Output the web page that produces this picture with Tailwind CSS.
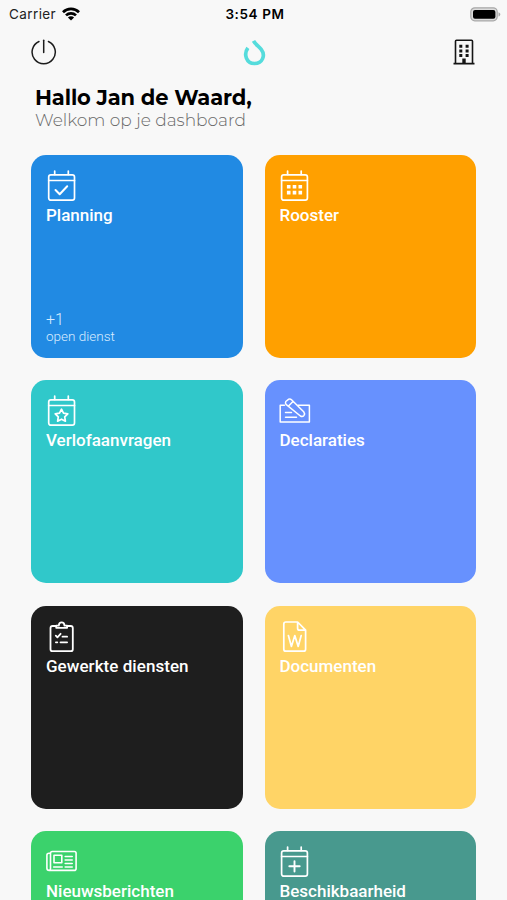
<!doctype html>
<html lang="nl">

<head>
    <meta charset="utf-8">
    <meta name="viewport" content="width=device-width, initial-scale=1">
    <title>Dashboard</title>
    <script src="https://cdn.jsdelivr.net/npm/@tailwindcss/browser@4"></script>
</head>

<body class="h-[900px] overflow-hidden bg-[#f8f8f8] font-['Roboto',sans-serif] text-black">

    <!-- status bar -->
    <div class="grid h-7 grid-cols-3 items-center pr-[6px] pl-[9px] font-['Inter',sans-serif] text-[13.5px] leading-7">
        <div class="flex items-center gap-[6px] text-[#222]">
            <span class="tracking-[0.4px]">Carrier</span>
            <svg class="h-[14px] w-[18px]" viewBox="0 0 18 14" fill="none" stroke="#000" stroke-width="2.7">
                <path d="M1 5.2a11.4 11.4 0 0 1 16 0"></path>
                <path d="M4 8.4a7.1 7.1 0 0 1 10 0"></path>
                <path d="M9 13.5L5.9 10.5a4.4 4.4 0 0 1 6.2 0z" fill="#000" stroke="none"></path>
            </svg>
        </div>
        <span class="text-center font-semibold tracking-[0.6px] whitespace-nowrap">3:54 PM</span>
        <svg class="h-[15px] w-[31px] justify-self-end" viewBox="0 0 31 15">
            <rect x=".8" y=".8" width="26.4" height="13" rx="4" fill="#dcdcdc" stroke="#a8a8a8" stroke-width="1.2"></rect>
            <rect x="3" y="2.9" width="22.4" height="8.9" rx="2" fill="#000"></rect>
            <path d="M28.5 5.2c2.4.9 2.4 3.4 0 4.3z" fill="#a8a8a8"></path>
        </svg>
    </div>

    <!-- top navigation -->
    <nav class="flex h-12 items-center justify-between pr-[31px] pl-[31px]">
        <svg class="h-[26px] w-[26px]" viewBox="0 0 26 26" fill="none" stroke="#1c1c1c" stroke-width="1.5" stroke-linecap="round">
            <path d="M8 2.5a11.6 11.6 0 1 0 9.4 0"></path>
            <path d="M12.7 1.3v12.2"></path>
        </svg>
        <svg class="h-[28px] w-[24px]" viewBox="0 0 24 28" fill="none" stroke="#55dcdc" stroke-width="3.700">
            <path d="M4.900 9.800C0.300 16.200 3.300 25.500 11.500 25.500C19.700 25.500 22.700 17.200 18.200 11.300C16 8.500 12.400 6.500 10.500 2.900"></path>
        </svg>
        <svg class="h-[26px] w-[24px]" viewBox="0 0 24 26" fill="none" stroke="#151515" stroke-width="1.6">
            <path d="M3.500 24.300V2.300q0-1 1-1h15q1 0 1 1v22M1.500 24.600h21"></path>
            <path d="M7.300 5.700h3v3h-3zM13.600 5.700h3v3h-3zM7.300 10.400h3v3h-3zM13.600 10.400h3v3h-3zM7.300 15.100h3v3h-3zM13.600 15.100h3v3h-3zM10.300 19.500h3.400v5h-3.400z" fill="#151515" stroke="none"></path>
        </svg>
    </nav>

    <header class="h-[79px] pt-[10px] pl-[35px] font-['Montserrat','Inter',sans-serif] whitespace-nowrap">
        <h1 class="text-[21px] leading-6 font-bold tracking-[-0.12px]">Hallo Jan de Waard,</h1>
        <p class="text-[17px] leading-[21px] font-light tracking-[-0.01px] text-[#6a6a6a]">Welkom op je dashboard</p>
    </header>

    <main class="ml-[31.4px] grid w-[445px] auto-rows-[203.2px] grid-cols-2 gap-x-[22px] gap-y-[22.1px] text-white">

        <a class="flex flex-col rounded-[15px] bg-[#218ae3] px-[14.6px] pt-[15px] pb-[14px]">
            <svg class="h-8 w-8" viewBox="0 0 32 32" fill="none" stroke="currentColor" stroke-width="1.7" stroke-linecap="round" stroke-linejoin="round">
                <rect x="2.7" y="4.8" width="25.8" height="25.4" rx="2.2"></rect>
                <path d="M2.7 10.5h25.8M8.700 1v3.500M22.300 1v3.500"></path>
                <path d="M9.500 20l4.200 4.200 7.500-8" stroke-width="2"></path>
            </svg>
            <h2 class="text-[17px] leading-[27px] font-medium">Planning</h2>
            <div class="mt-auto font-light text-[#d9ecff]">
                <p class="text-[16px] leading-[17px]">+1</p>
                <p class="text-[13.5px] leading-4">open dienst</p>
            </div>
        </a>

        <a class="flex flex-col rounded-[15px] bg-[#ffa000] px-[14.6px] pt-[15px]">
            <svg class="h-8 w-8" viewBox="0 0 32 32" fill="none" stroke="currentColor" stroke-width="1.7" stroke-linecap="round" stroke-linejoin="round">
                <rect x="2.6" y="4.8" width="25.8" height="25.4" rx="2.2"></rect>
                <path d="M2.600 10.500h25.800M8.600 1v3.500M22.200 1v3.500"></path>
                <path d="M7.900 15h3.600v3.600H7.900zM13.700 15h3.600v3.600h-3.600zM19.500 15h3.600v3.600h-3.600zM7.900 20.800h3.600v3.600H7.900zM13.700 20.800h3.600v3.600h-3.600zM19.500 20.800h3.600v3.600h-3.600z" fill="currentColor" stroke="none"></path>
            </svg>
            <h2 class="text-[17px] leading-[27px] font-medium">Rooster</h2>
        </a>

        <a class="flex flex-col rounded-[15px] bg-[#30c8ca] px-[14.6px] pt-[15px]">
            <svg class="h-8 w-8" viewBox="0 0 32 32" fill="none" stroke="currentColor" stroke-width="1.7" stroke-linecap="round" stroke-linejoin="round">
                <rect x="2.7" y="4.8" width="25.8" height="25.4" rx="2.2"></rect>
                <path d="M2.700 10.500h25.800M8.700 1v3.500M22.300 1v3.500"></path>
                <path d="M15.500 14.200l2 3.900 4.300.7-3.100 3.100.7 4.300-3.900-2-3.900 2 .7-4.300-3.100-3.100 4.300-.7z"></path>
            </svg>
            <h2 class="text-[17px] leading-[27px] font-medium">Verlofaanvragen</h2>
        </a>

        <a class="flex flex-col rounded-[15px] bg-[#6791fe] px-[14.6px] pt-[15px]">
            <svg class="h-8 w-8" viewBox="0 0 32 32" fill="none" stroke="currentColor" stroke-width="1.5" stroke-linecap="round" stroke-linejoin="round">
                <path d="M5.500 10.200H1.200v16.900h29.200V10.200H19"></path>
                <path d="M6.800 6.500l3-2.400q1.500-.6 2.700.6l12.200 12.100q1.500 2 .3 3.600-1.500 1.700-3.600.6L7 9.400q-1-1.500-.2-2.900zM9.300 11.200l4.900-4.900M6.500 17.500h6M6.500 22.300h11"></path>
            </svg>
            <h2 class="text-[17px] leading-[27px] font-medium">Declaraties</h2>
        </a>

        <a class="flex flex-col rounded-[15px] bg-[#1e1e1e] px-[14.6px] pt-[15px]">
            <svg class="h-8 w-8" viewBox="0 0 32 32" fill="none" stroke="currentColor" stroke-width="1.8" stroke-linecap="round" stroke-linejoin="round">
                <path d="M10 5H6.500q-2 0-2 2v21.200q0 2 2 2h18.300q2 0 2-2V7q0-2-2-2h-3.500"></path>
                <path d="M10.200 6.800V4.700h2.600c.2-4.400 5.500-4.400 5.700 0h2.600v2.100z"></path>
                <path d="M9.800 14.700l1.600 1.600 3.200-3.500M16.500 15.700h4.600M9.900 21.300h1.400M14.500 21.300h6.600"></path>
            </svg>
            <h2 class="text-[17px] leading-[27px] font-medium tracking-[0.05px]">Gewerkte diensten</h2>
        </a>

        <a class="flex flex-col rounded-[15px] bg-[#ffd466] px-[14.6px] pt-[15px]">
            <svg class="h-8 w-8" viewBox="0 0 32 32" fill="none" stroke="currentColor" stroke-width="1.7" stroke-linecap="round" stroke-linejoin="round">
                <path d="M18.600 1H6.900q-2.100 0-2.100 2v25.200q0 2 2.100 2h17.600q2.100 0 2.100-2V9.200zM18.600 1v6.200q0 2 2 2h5.900"></path>
                <path d="M9.400 14.500l3 11 3.400-11 3.400 11 3-11"></path>
            </svg>
            <h2 class="text-[17px] leading-[27px] font-medium">Documenten</h2>
        </a>

        <a class="flex flex-col rounded-[15px] bg-[#3bd26c] px-[14.6px] pt-[15px]">
            <svg class="h-8 w-8" viewBox="0 0 32 32" fill="none" stroke="currentColor" stroke-width="1.6" stroke-linecap="round" stroke-linejoin="round">
                <path d="M4.500 7.200H3Q.9 7.200.9 9.200v13q0 2.200 2.200 2.200h25q2 0 2-2V7.200q0-1.700-1.700-1.700H6.200q-1.700 0-1.700 1.700v15.400q0 1.800-1.400 1.800"></path>
                <path d="M8 9.300h7.800v7.500H8zM19.200 10.500h7M19.200 14h7M19.200 17.500h7M7.700 21h8.500M19.200 21h7"></path>
            </svg>
            <h2 class="text-[17px] leading-[27px] font-medium">Nieuwsberichten</h2>
        </a>

        <a class="flex flex-col rounded-[15px] bg-[#48998e] px-[14.6px] pt-[15px]">
            <svg class="h-8 w-8" viewBox="0 0 32 32" fill="none" stroke="currentColor" stroke-width="1.7" stroke-linecap="round" stroke-linejoin="round">
                <rect x="2.6" y="4.8" width="25.8" height="25.4" rx="2.2"></rect>
                <path d="M2.600 10.500h25.800M8.600 1v3.500M22.200 1v3.500"></path>
                <path d="M10.300 20.300h10.400M15.500 15.100v10.400" stroke-width="1.9"></path>
            </svg>
            <h2 class="text-[17px] leading-[27px] font-medium">Beschikbaarheid</h2>
        </a>
    </main>

</body>

</html>
